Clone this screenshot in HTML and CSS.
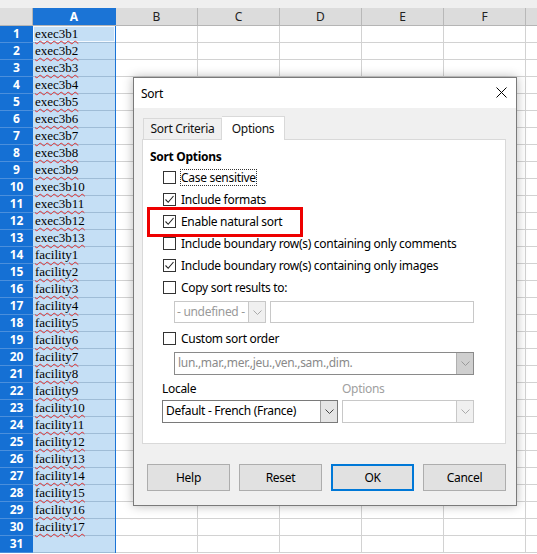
FILE: index.html
```html
<!DOCTYPE html>
<html lang="en">
<head>
  <meta charset="UTF-8" />
  <title>Sort</title>
  <link rel="stylesheet" href="styles.css">
</head>
<body>
  <!-- Spreadsheet behind the dialog -->
  <div class="sheet">
    <div class="topbar"></div>
    <div class="colheads">
      <div class="corner"></div>
      <div class="colhead sel">A</div>
      <div class="colhead">B</div>
      <div class="colhead">C</div>
      <div class="colhead">D</div>
      <div class="colhead">E</div>
      <div class="colhead">F</div>
      <div class="colhead last"></div>
    </div>
    <div class="sheet-body">
      <div class="rownums">
        <div>1</div><div>2</div><div>3</div><div>4</div><div>5</div><div>6</div><div>7</div><div>8</div>
        <div>9</div><div>10</div><div>11</div><div>12</div><div>13</div><div>14</div><div>15</div><div>16</div>
        <div>17</div><div>18</div><div>19</div><div>20</div><div>21</div><div>22</div><div>23</div><div>24</div>
        <div>25</div><div>26</div><div>27</div><div>28</div><div>29</div><div>30</div><div>31</div>
      </div>
      <div class="col-a">
        <div class="cell cursor"><span>exec3b1</span></div>
        <div class="cell"><span>exec3b2</span></div>
        <div class="cell"><span>exec3b3</span></div>
        <div class="cell"><span>exec3b4</span></div>
        <div class="cell"><span>exec3b5</span></div>
        <div class="cell"><span>exec3b6</span></div>
        <div class="cell"><span>exec3b7</span></div>
        <div class="cell"><span>exec3b8</span></div>
        <div class="cell"><span>exec3b9</span></div>
        <div class="cell"><span>exec3b10</span></div>
        <div class="cell"><span>exec3b11</span></div>
        <div class="cell"><span>exec3b12</span></div>
        <div class="cell"><span>exec3b13</span></div>
        <div class="cell"><span>facility1</span></div>
        <div class="cell"><span>facility2</span></div>
        <div class="cell"><span>facility3</span></div>
        <div class="cell"><span>facility4</span></div>
        <div class="cell"><span>facility5</span></div>
        <div class="cell"><span>facility6</span></div>
        <div class="cell"><span>facility7</span></div>
        <div class="cell"><span>facility8</span></div>
        <div class="cell"><span>facility9</span></div>
        <div class="cell"><span>facility10</span></div>
        <div class="cell"><span>facility11</span></div>
        <div class="cell"><span>facility12</span></div>
        <div class="cell"><span>facility13</span></div>
        <div class="cell"><span>facility14</span></div>
        <div class="cell"><span>facility15</span></div>
        <div class="cell"><span>facility16</span></div>
        <div class="cell"><span>facility17</span></div>
        <div class="cell"></div>
      </div>
      <div class="grid"></div>
    </div>
  </div>

  <!-- Sort dialog -->
  <div class="dialog">
    <div class="titlebar">
      <span>Sort</span>
      <svg class="close" width="11" height="11" viewBox="0 0 11 11">
        <path d="M0.5 0.5 L10.5 10.5 M10.5 0.5 L0.5 10.5" stroke="#000" stroke-width="1" fill="none"/>
      </svg>
    </div>
    <div class="dlg-body">
      <div class="tabs">
        <div class="tab">Sort Criteria</div>
        <div class="tab active">Options</div>
      </div>
      <div class="panel">
        <div class="heading">Sort Options</div>

        <div class="check-row">
          <span class="box"></span>
          <span class="focus">Case sensitive</span>
        </div>
        <div class="check-row">
          <span class="box on"><svg width="11" height="11" viewBox="0 0 11 11"><path d="M1.5 5.5 L4.2 8.3 L9.5 2" stroke="#222" stroke-width="1.1" fill="none"/></svg></span>
          <span>Include formats</span>
        </div>
        <div class="check-row marked">
          <span class="box on"><svg width="11" height="11" viewBox="0 0 11 11"><path d="M1.5 5.5 L4.2 8.3 L9.5 2" stroke="#222" stroke-width="1.1" fill="none"/></svg></span>
          <span>Enable natural sort</span>
        </div>
        <div class="check-row">
          <span class="box"></span>
          <span>Include boundary row(s) containing only comments</span>
        </div>
        <div class="check-row">
          <span class="box on"><svg width="11" height="11" viewBox="0 0 11 11"><path d="M1.5 5.5 L4.2 8.3 L9.5 2" stroke="#222" stroke-width="1.1" fill="none"/></svg></span>
          <span>Include boundary row(s) containing only images</span>
        </div>
        <div class="check-row">
          <span class="box"></span>
          <span>Copy sort results to:</span>
        </div>

        <div class="copy-row">
          <div class="combo disabled small">
            <span class="combo-text">- undefined -</span>
            <span class="arrow"><svg width="9" height="5" viewBox="0 0 9 5"><path d="M0.5 0.5 L4.5 4.5 L8.5 0.5" stroke="#aaa" fill="none"/></svg></span>
          </div>
          <div class="field disabled"></div>
        </div>

        <div class="check-row">
          <span class="box"></span>
          <span>Custom sort order</span>
        </div>

        <div class="order-row">
          <div class="combo dim wide">
            <span class="combo-text">lun.,mar.,mer.,jeu.,ven.,sam.,dim.</span>
            <span class="arrow"><svg width="9" height="5" viewBox="0 0 9 5"><path d="M0.5 0.5 L4.5 4.5 L8.5 0.5" stroke="#999" fill="none"/></svg></span>
          </div>
        </div>

        <div class="locale-labels">
          <span class="lbl-locale">Locale</span>
          <span class="lbl-options">Options</span>
        </div>
        <div class="locale-row">
          <div class="combo locale">
            <span class="combo-text">Default - French (France)</span>
            <span class="arrow"><svg width="9" height="5" viewBox="0 0 9 5"><path d="M0.5 0.5 L4.5 4.5 L8.5 0.5" stroke="#444" fill="none"/></svg></span>
          </div>
          <div class="combo disabled opts">
            <span class="combo-text"></span>
            <span class="arrow"><svg width="9" height="5" viewBox="0 0 9 5"><path d="M0.5 0.5 L4.5 4.5 L8.5 0.5" stroke="#aaa" fill="none"/></svg></span>
          </div>
        </div>
      </div>

      <div class="buttons">
        <button class="btn">Help</button>
        <button class="btn">Reset</button>
        <button class="btn default">OK</button>
        <button class="btn">Cancel</button>
      </div>
    </div>
  </div>
</body>
</html>
```

FILE: styles.css
```css
* {
  box-sizing: border-box;
}
body {
  margin: 0;
  width: 537px;
  height: 554px;
  overflow: hidden;
  position: relative;
  background: #fff;
  font-family: "Noto Sans", sans-serif;
}

/* ---- spreadsheet ---- */
.topbar {
  height: 8px;
  background: #efefef;
}
.colheads {
  display: flex;
  height: 18px;
  border-bottom: 1px solid #b5b5b5;
}
.corner {
  width: 33px;
  background: #dedede;
  border-right: 1px solid #b5b5b5;
}
.colhead {
  width: 82px;
  background: #dcdcdc;
  border-right: 1px solid #b8b8b8;
  font-size: 12px;
  line-height: 17px;
  text-align: center;
  color: #222;
}
.colhead.sel {
  width: 83px;
  background: #1b74d6;
  color: #fff;
  font-weight: bold;
  border-right-color: #1b74d6;
}
.colhead.last {
  flex: 1;
  border-right: none;
}
.sheet-body {
  display: flex;
}
.rownums {
  width: 33px;
  background: #1570d4;
}
.rownums div {
  height: 17px;
  border-bottom: 1px solid #4b8fdc;
  color: #fff;
  font-size: 12px;
  font-weight: bold;
  line-height: 16px;
  text-align: center;
}
.col-a {
  width: 83px;
  background: #c5dff5;
  border-right: 1px solid #1b74d6;
}
.cell {
  height: 17px;
  border-bottom: 1px solid #9fbcd6;
  padding-left: 2px;
  font-family: "Liberation Serif", serif;
  font-size: 13px;
  line-height: 16px;
  color: #000;
}
.cell span {
  text-decoration: underline wavy #e03030;
  text-decoration-thickness: 1px;
  text-underline-offset: 2px;
}
.cell.cursor {
  box-shadow: inset 0 0 0 1px #f4f9ff;
}
.grid {
  flex: 1;
  height: 527px;
  background:
    repeating-linear-gradient(to right, transparent 0 81px, #d2d2d2 81px 82px),
    repeating-linear-gradient(to bottom, transparent 0 16px, #d2d2d2 16px 17px);
}

/* ---- dialog ---- */
.dialog {
  position: absolute;
  left: 133px;
  top: 77px;
  width: 384px;
  height: 429px;
  background: #f0f0f0;
  border: 1px solid #7a7a7a;
  box-shadow: 0 0 10px rgba(0, 0, 0, 0.28);
  font-size: 12px;
  letter-spacing: -0.3px;
  color: #000;
}
.titlebar {
  height: 30px;
  background: #fff;
  display: flex;
  align-items: center;
  justify-content: space-between;
  padding: 0 9px 0 7px;
}
.close {
  margin-top: -1px;
}
.dlg-body {
  padding: 8px 10px 0 8px;
}
.tabs {
  display: flex;
  align-items: flex-end;
  padding-left: 1px;
  height: 23px;
}
.tab {
  height: 21px;
  width: 79px;
  border: 1px solid #d9d9d9;
  border-bottom: none;
  line-height: 20px;
  text-align: center;
  color: #111;
}
.tab.active {
  width: 63px;
  height: 24px;
  margin-bottom: -1px;
  background: #fff;
  position: relative;
  z-index: 1;
  border-left: none;
  line-height: 23px;
}
.panel {
  height: 305px;
  background: #fff;
  border: 1px solid #d9d9d9;
  padding: 8px 8px 0 7px;
}
.heading {
  font-weight: bold;
  height: 18px;
  line-height: 18px;
}
.check-row {
  display: flex;
  align-items: center;
  gap: 5px;
  height: 22px;
  padding-left: 13px;
  position: relative;
}
.box {
  width: 13px;
  height: 13px;
  border: 1px solid #333;
  background: #fff;
  display: flex;
  align-items: center;
  justify-content: center;
}
.focus {
  outline: 1px dotted #333;
  outline-offset: 0;
  line-height: 15px;
}
.check-row.marked::after {
  content: "";
  position: absolute;
  left: -3px;
  top: -3px;
  width: 150px;
  height: 24px;
  border: 3px solid #ee0000;
}
.copy-row {
  display: flex;
  gap: 4px;
  padding-left: 24px;
  margin-top: 3px;
  margin-bottom: 4px;
}
.combo {
  height: 22px;
  display: flex;
  border: 1px solid #7a7a7a;
  background: #fff;
}
.combo-text {
  flex: 1;
  padding-left: 3px;
  line-height: 20px;
  white-space: nowrap;
  overflow: hidden;
}
.arrow {
  width: 17px;
  border-left: 1px solid #a0a0a0;
  background: #e5e5e5;
  display: flex;
  align-items: center;
  justify-content: center;
}
.combo.disabled {
  border-color: #c8c8c8;
  color: #9a9a9a;
}
.combo.disabled .arrow {
  background: #f0f0f0;
  border-left-color: #c8c8c8;
}
.combo.small {
  width: 92px;
}
.combo.small .combo-text {
  padding-left: 2px;
}
.field {
  width: 204px;
  height: 22px;
  border: 1px solid #c8c8c8;
  background: #fff;
}
.order-row {
  padding-left: 24px;
  margin-top: 3px;
}
.combo.dim {
  width: 300px;
  height: 23px;
  border-color: #8a8a8a;
  color: #8a8a8a;
}
.combo.dim .arrow {
  background: #cfcfcf;
  border-left-color: #b0b0b0;
}
.locale-labels {
  display: flex;
  margin-top: 4px;
  height: 20px;
  line-height: 20px;
  padding-left: 12px;
}
.lbl-locale {
  width: 180px;
}
.lbl-options {
  color: #a0a0a0;
}
.locale-row {
  display: flex;
  gap: 4px;
  padding-left: 12px;
  margin-top: 1px;
}
.combo.locale {
  width: 176px;
  height: 23px;
}
.combo.opts {
  width: 132px;
  height: 23px;
}
.buttons {
  display: flex;
  gap: 9px;
  padding-left: 5px;
  margin-top: 20px;
}
.btn {
  width: 83px;
  height: 27px;
  background: #e1e1e1;
  border: 1px solid #adadad;
  font-family: "Noto Sans", sans-serif;
  font-size: 12px;
  letter-spacing: -0.3px;
  color: #000;
  padding: 0;
}
.btn.default {
  border: 2px solid #0078d7;
}
```
